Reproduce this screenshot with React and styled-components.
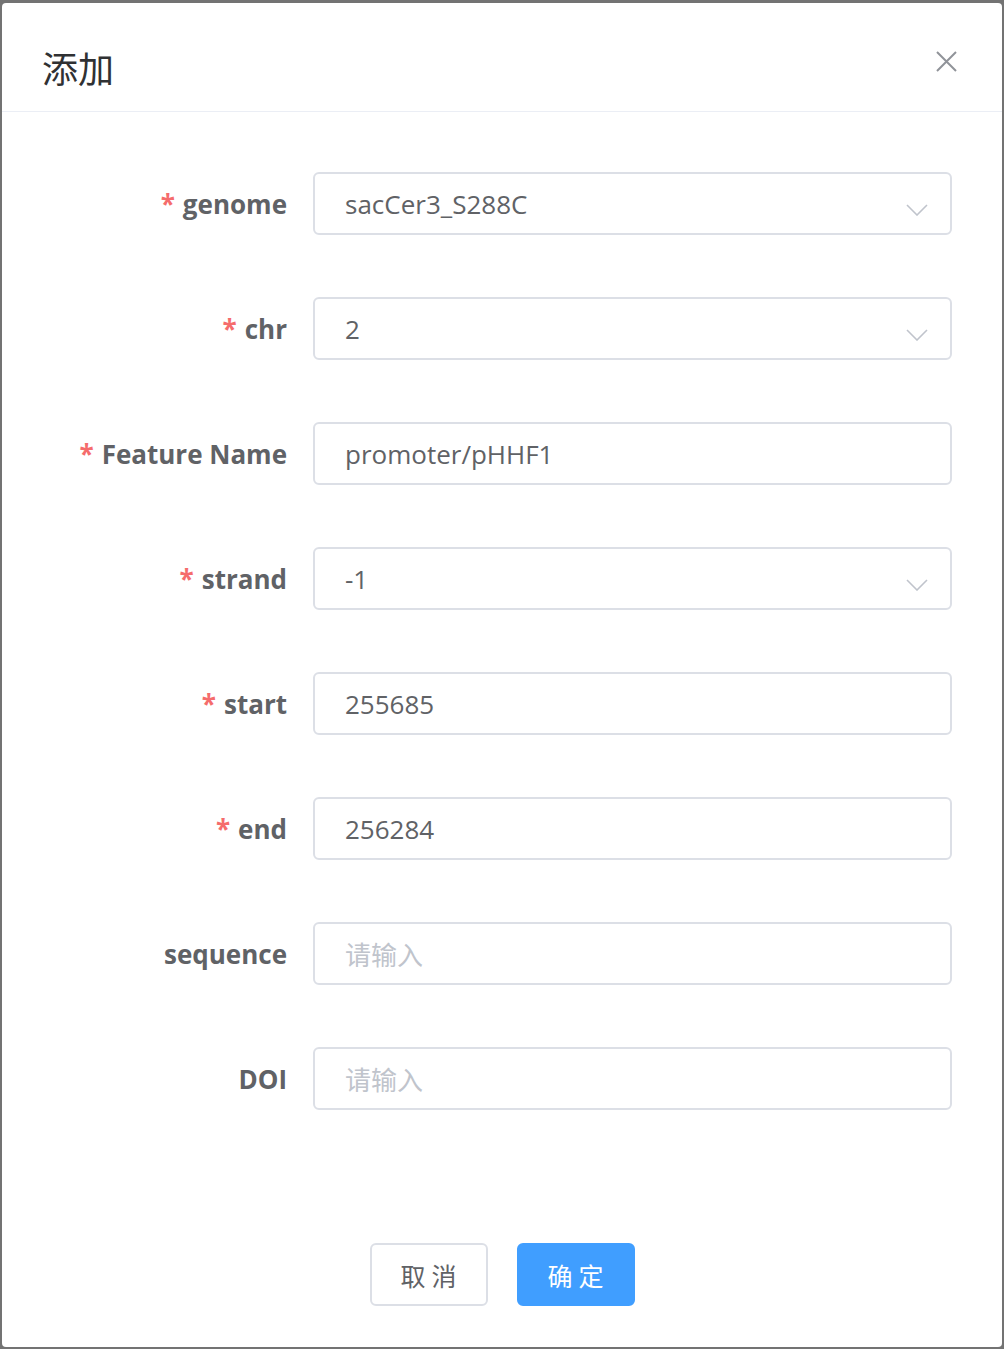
import React from "react";
import styled, { createGlobalStyle } from "styled-components";

const GlobalStyle = createGlobalStyle`
  html, body {
    margin: 0;
    padding: 0;
    background: #737373;
  }
  body {
    font-family: "Open Sans", "Noto Sans CJK SC", sans-serif;
  }
`;

const StyledDialog = styled.div`
  margin: 3px 2px 0;
  width: 1000px;
  height: 1344px;
  background: #ffffff;
  border-radius: 4px;
  display: flex;
  flex-direction: column;
`;

const StyledHeader = styled.div`
  height: 109px;
  border-bottom: 1px solid #ebeef5;
  display: flex;
  align-items: center;
  justify-content: space-between;
  padding: 0 45px 0 40px;
  box-sizing: border-box;
`;

const StyledTitle = styled.div`
  font-family: "Noto Sans CJK SC", sans-serif;
  font-size: 36px;
  color: #303133;
  margin-top: 20px;
`;

const StyledClose = styled.svg`
  width: 21px;
  height: 21px;
  margin-top: 8px;
  stroke: #909399;
  stroke-width: 2;
`;

const StyledBody = styled.form`
  padding-top: 60px;
  display: flex;
  flex-direction: column;
  gap: 62px;
`;

const StyledRow = styled.div`
  display: flex;
  align-items: center;
  height: 63px;
`;

const StyledLabel = styled.label`
  width: 311px;
  padding-right: 26px;
  box-sizing: border-box;
  text-align: right;
  font-size: 26px;
  font-weight: 700;
  color: #606266;
  white-space: nowrap;
`;

const StyledStar = styled.span`
  color: #f56c6c;
  font-weight: 700;
  margin-right: 8px;
`;

const StyledInput = styled.div`
  position: relative;
  width: 639px;
  height: 63px;
  box-sizing: border-box;
  border: 2px solid #dcdfe6;
  border-radius: 6px;
  display: flex;
  align-items: center;
  padding-left: 30px;
  font-size: 26px;
  color: ${({ placeholder }) => (placeholder ? "#c0c4cc" : "#606266")};
  font-family: ${({ placeholder }) =>
    placeholder ? '"Noto Sans CJK SC", sans-serif' : '"Open Sans", sans-serif'};
`;

const StyledChevron = styled.svg`
  position: absolute;
  right: 22px;
  top: 30px;
  width: 22px;
  height: 12px;
  stroke: #c0c4cc;
  stroke-width: 1.6;
  fill: none;
`;

const StyledFooter = styled.div`
  margin-top: auto;
  padding-bottom: 41px;
  display: flex;
  justify-content: center;
  gap: 29px;
`;

const StyledButton = styled.button`
  width: 118px;
  height: 63px;
  box-sizing: border-box;
  border-radius: 6px;
  border: 2px solid ${({ primary }) => (primary ? "#409eff" : "#dcdfe6")};
  background: ${({ primary }) => (primary ? "#409eff" : "#ffffff")};
  color: ${({ primary }) => (primary ? "#ffffff" : "#606266")};
  font-family: "Noto Sans CJK SC", sans-serif;
  font-size: 25px;
  letter-spacing: 6px;
  padding: 0 0 0 6px;
`;

const fields = [
  { label: "genome", value: "sacCer3_S288C", required: true, select: true },
  { label: "chr", value: "2", required: true, select: true },
  { label: "Feature Name", value: "promoter/pHHF1", required: true },
  { label: "strand", value: "-1", required: true, select: true },
  { label: "start", value: "255685", required: true },
  { label: "end", value: "256284", required: true },
  { label: "sequence", value: "" },
  { label: "DOI", value: "" },
];

export default function App() {
  return (
    <>
      <GlobalStyle />
      <StyledDialog>
        <StyledHeader>
          <StyledTitle>添加</StyledTitle>
          <StyledClose viewBox="0 0 21 21">
            <path d="M1 1 L20 20 M20 1 L1 20" />
          </StyledClose>
        </StyledHeader>
        <StyledBody>
          {fields.map((f) => (
            <StyledRow key={f.label}>
              <StyledLabel>
                {f.required && <StyledStar>*</StyledStar>}
                {f.label}
              </StyledLabel>
              <StyledInput placeholder={!f.value ? 1 : undefined}>
                {f.value || "请输入"}
                {f.select && (
                  <StyledChevron viewBox="0 0 22 12">
                    <path d="M1 1 L11 11 L21 1" />
                  </StyledChevron>
                )}
              </StyledInput>
            </StyledRow>
          ))}
        </StyledBody>
        <StyledFooter>
          <StyledButton type="button">取消</StyledButton>
          <StyledButton type="button" primary={1}>
            确定
          </StyledButton>
        </StyledFooter>
      </StyledDialog>
    </>
  );
}
